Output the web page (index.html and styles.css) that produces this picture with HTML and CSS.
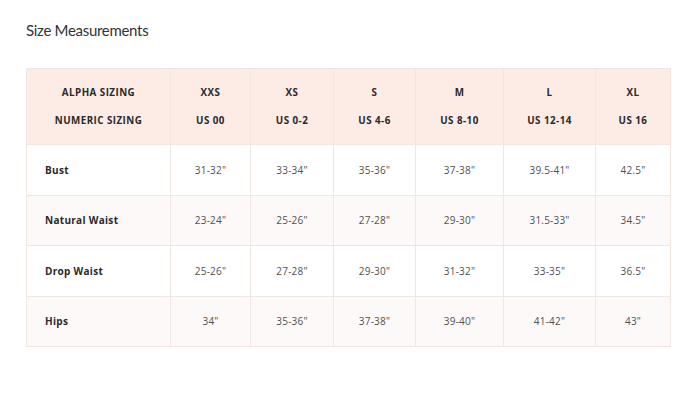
FILE: index.html
```html
<!DOCTYPE html>
<html>
<head>
<meta charset="utf-8">
<link rel="stylesheet" href="styles.css">
</head>
<body>
<div class="page">
  <h1 class="title">Size Measurements</h1>
  <table class="chart">
    <colgroup>
      <col class="c0"><col class="c1"><col class="c2"><col class="c3"><col class="c4"><col class="c5"><col class="c6">
    </colgroup>
    <thead>
      <tr>
        <th><span class="ln">ALPHA SIZING</span><span class="ln">NUMERIC SIZING</span></th>
        <th><span class="ln">XXS</span><span class="ln">US 00</span></th>
        <th><span class="ln">XS</span><span class="ln">US 0-2</span></th>
        <th><span class="ln">S</span><span class="ln">US 4-6</span></th>
        <th><span class="ln">M</span><span class="ln">US 8-10</span></th>
        <th><span class="ln">L</span><span class="ln">US 12-14</span></th>
        <th><span class="ln">XL</span><span class="ln">US 16</span></th>
      </tr>
    </thead>
    <tbody>
      <tr>
        <td class="label">Bust</td><td>31-32"</td><td>33-34"</td><td>35-36"</td><td>37-38"</td><td>39.5-41"</td><td>42.5"</td>
      </tr>
      <tr class="alt">
        <td class="label">Natural Waist</td><td>23-24"</td><td>25-26"</td><td>27-28"</td><td>29-30"</td><td>31.5-33"</td><td>34.5"</td>
      </tr>
      <tr>
        <td class="label">Drop Waist</td><td>25-26"</td><td>27-28"</td><td>29-30"</td><td>31-32"</td><td>33-35"</td><td>36.5"</td>
      </tr>
      <tr class="alt">
        <td class="label">Hips</td><td>34"</td><td>35-36"</td><td>37-38"</td><td>39-40"</td><td>41-42"</td><td>43"</td>
      </tr>
    </tbody>
  </table>
</div>
</body>
</html>
```
FILE: styles.css
```css
html, body {
  margin: 0;
  padding: 0;
  background: #ffffff;
}
.page {
  padding: 18px 30px 0 26px;
  font-family: "Lato", "Liberation Sans", sans-serif;
  color: #333333;
}
.title {
  margin: 0;
  font-family: "Lato", "Liberation Sans", sans-serif;
  font-weight: 400;
  font-size: 15px;
  letter-spacing: -0.3px;
  line-height: 24px;
  color: #333333;
}
.chart {
  margin-top: 26px;
  width: 644px;
  border-collapse: collapse;
  table-layout: fixed;
  font-family: "Open Sans", "Liberation Sans", sans-serif;
}
.c0 { width: 144px; }
.c1 { width: 80px; }
.c2 { width: 83px; }
.c3 { width: 82px; }
.c4 { width: 88px; }
.c5 { width: 92px; }
.c6 { width: 75px; }
.chart th, .chart td {
  border: 1px solid #f2e6e1;
  text-align: center;
  padding: 0;
}
.chart th {
  background: #fdebe5;
  padding: 10px 0 9px;
  font-size: 9.8px;
  font-weight: 700;
  letter-spacing: 0.45px;
  color: #2a2a2a;
}
.ln {
  display: block;
  line-height: 28px;
}
.chart tbody tr {
  height: 50.5px;
}
.chart td {
  font-size: 10px;
  color: #505050;
  letter-spacing: 0.2px;
}
.chart td.label {
  text-align: left;
  padding-left: 18px;
  font-weight: 700;
  color: #2a2a2a;
  letter-spacing: 0.3px;
}
.chart tr.alt td {
  background: #fdf9f8;
}
```
